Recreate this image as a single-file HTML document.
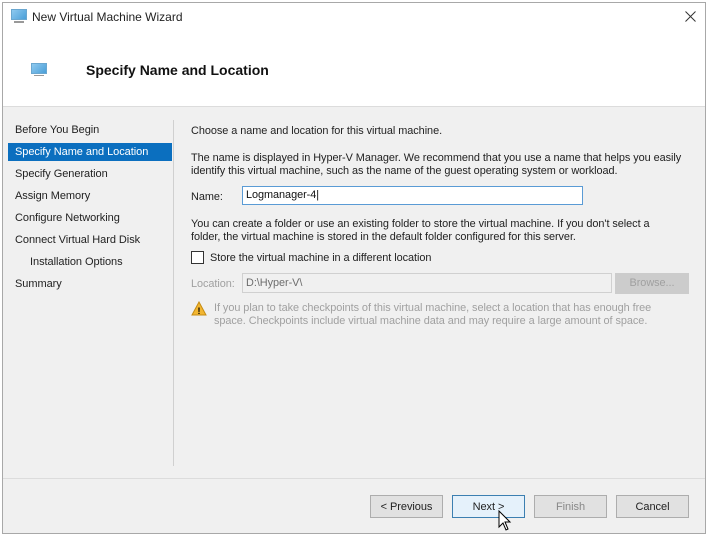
<!DOCTYPE html>
<html><head><style>
*{margin:0;padding:0;box-sizing:border-box}
body{width:708px;height:536px;background:#fff;position:relative;overflow:hidden;font-family:"Liberation Sans",sans-serif;font-size:11px;color:#222}
.a{position:absolute;white-space:nowrap}
.t{letter-spacing:-0.05px}
.win{position:absolute;left:2px;top:2px;width:704px;height:532px;border:1px solid #a8a8a8;background:#f0f0f0}
.btn{position:absolute;top:495px;width:73px;height:23px;border:1px solid #adadad;background:#e1e1e1;text-align:center;line-height:23px;font-size:11px}
.mon{position:absolute;width:16px;height:11px;background:linear-gradient(135deg,#8ec9ef,#4a9fd8);border:1px solid #6aa7d0}
</style></head><body>
<div class="win"></div>
<div class="a" style="left:3px;top:3px;width:702px;height:104px;background:#fff;border-bottom:1px solid #dcdcdc"></div>
<div class="mon" style="left:11px;top:9px"></div><div class="a" style="left:14px;top:21px;width:10px;height:2px;background:#999"></div>
<div class="a" style="left:32px;top:10px;font-size:12px;color:#222">New Virtual Machine Wizard</div>
<svg class="a" style="left:685px;top:11px" width="11" height="11"><path d="M0.5 0.5L10.5 10.5M10.5 0.5L0.5 10.5" stroke="#333" stroke-width="1"/></svg>
<div class="mon" style="left:31px;top:63px"></div><div class="a" style="left:34px;top:75px;width:10px;height:1px;background:#999"></div>
<div class="a" style="left:86px;top:62px;font-size:14px;font-weight:bold;color:#111">Specify Name and Location</div>

<div class="t">
<div class="a" style="left:15px;top:124px">Before You Begin</div>
<div class="a" style="left:8px;top:143px;width:164px;height:18px;background:#0b6fbf"></div>
<div class="a" style="left:15px;top:146px;color:#fff">Specify Name and Location</div>
<div class="a" style="left:15px;top:168px">Specify Generation</div>
<div class="a" style="left:15px;top:190px">Assign Memory</div>
<div class="a" style="left:15px;top:212px">Configure Networking</div>
<div class="a" style="left:15px;top:234px">Connect Virtual Hard Disk</div>
<div class="a" style="left:30px;top:256px">Installation Options</div>
<div class="a" style="left:15px;top:278px">Summary</div>
</div>
<div class="a" style="left:173px;top:120px;width:1px;height:346px;background:#d0d0d0"></div>

<div class="t" style="font-size:10.9px">
<div class="a" style="left:191px;top:125px">Choose a name and location for this virtual machine.</div>
<div class="a" style="left:191px;top:152px;line-height:13px">The name is displayed in Hyper-V Manager. We recommend that you use a name that helps you easily<br>identify this virtual machine, such as the name of the guest operating system or workload.</div>
<div class="a" style="left:191px;top:191px">Name:</div>
<div class="a" style="left:242px;top:186px;width:341px;height:19px;background:#fff;border:1px solid #5a9bd5;padding:2px 3px;color:#111">Logmanager-4|</div>
<div class="a" style="left:191px;top:218px;line-height:13px">You can create a folder or use an existing folder to store the virtual machine. If you don't select a<br>folder, the virtual machine is stored in the default folder configured for this server.</div>
<div class="a" style="left:191px;top:251px;width:13px;height:13px;border:1px solid #333;background:#fff"></div>
<div class="a" style="left:210px;top:252px">Store the virtual machine in a different location</div>
<div class="a" style="left:191px;top:278px;color:#a0a0a0">Location:</div>
<div class="a" style="left:242px;top:273px;width:370px;height:20px;border:1px solid #d0d0d0;background:#f0f0f0;padding:3px;color:#6d6d6d">D:\Hyper-V\</div>
<div class="a" style="left:615px;top:273px;width:74px;height:21px;background:#ccc;border:1px solid #ccc;color:#a0a0a0;text-align:center;line-height:19px">Browse...</div>
<div class="a" style="left:214px;top:302px;line-height:13px;color:#a0a0a0">If you plan to take checkpoints of this virtual machine, select a location that has enough free<br>space. Checkpoints include virtual machine data and may require a large amount of space.</div>
</div>
<svg class="a" style="left:191px;top:301px" width="16" height="15"><path d="M8 1L15 14H1Z" fill="#f2b631" stroke="#c58b12"/><text x="8" y="13" font-size="9" font-weight="bold" text-anchor="middle" font-family="Liberation Sans">!</text></svg>

<div class="a" style="left:3px;top:478px;width:702px;height:1px;background:#dcdcdc"></div>
<div class="btn t" style="left:370px">&lt; Previous</div>
<div class="btn t" style="left:452px;border-color:#3c7fb1;background:#e5f1fb">Next &gt;</div>
<div class="btn t" style="left:534px;color:#888">Finish</div>
<div class="btn t" style="left:616px">Cancel</div>
<svg class="a" style="left:498px;top:510px" width="14" height="22"><path d="M1 1V17L5 13L8 20L10 19L7 12H12Z" fill="#fff" stroke="#000"/></svg>
</body></html>
